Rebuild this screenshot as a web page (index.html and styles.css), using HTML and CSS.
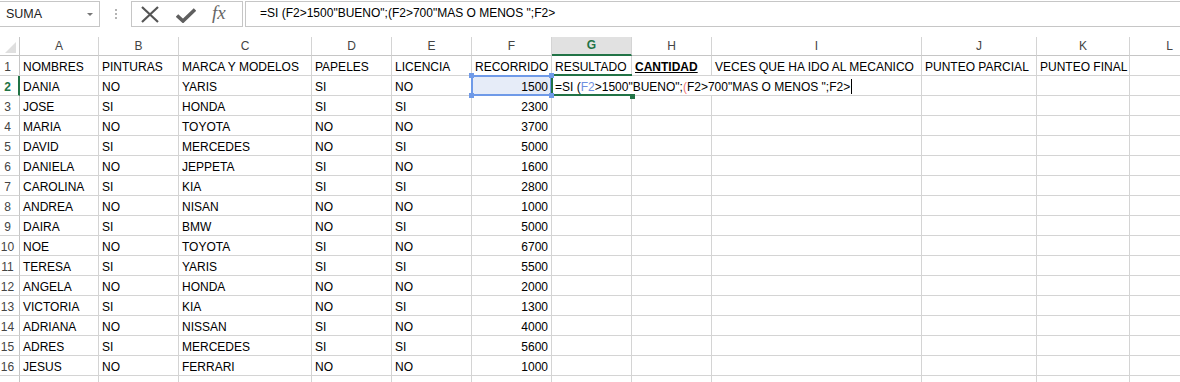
FILE: index.html
```html
<!DOCTYPE html>
<html lang="es">
<head>
    <meta charset="UTF-8">
    <title>Libro1 - Excel</title>
    <link rel="stylesheet" href="styles.css">
</head>
<body>

    <!-- Formula bar -->
    <div class="formula-bar">
        <div class="name-box"><span>SUMA</span><span class="arrow"></span></div>
        <div class="grip"><span></span><span></span><span></span></div>
        <div class="fx-box">
            <svg class="icon-x" width="18" height="17" viewBox="0 0 18 17"><path d="M1 1 L17 16 M17 1 L1 16" stroke="#555" stroke-width="2.2" fill="none"/></svg>
            <svg class="icon-check" width="20" height="15" viewBox="0 0 20 15"><path d="M1 7.5 L7 13 L19 1.5" stroke="#5f5f5f" stroke-width="3.6" fill="none"/></svg>
            <span class="fx">fx</span>
        </div>
        <div class="formula-input">=SI (F2&gt;1500"BUENO";(F2&gt;700"MAS O MENOS ";F2&gt;</div>
    </div>

    <!-- Sheet -->
    <div class="sheet">
        <div class="row head">
            <div class="corner"><span class="tri"></span></div>
            <div class="ch">A</div><div class="ch">B</div><div class="ch">C</div><div class="ch">D</div>
            <div class="ch">E</div><div class="ch">F</div><div class="ch sel">G</div><div class="ch">H</div>
            <div class="ch">I</div><div class="ch">J</div><div class="ch">K</div><div class="ch">L</div>
        </div>
        <div class="row">
            <div class="rh">1</div>
            <div class="c">NOMBRES</div><div class="c">PINTURAS</div><div class="c">MARCA Y MODELOS</div><div class="c">PAPELES</div>
            <div class="c">LICENCIA</div><div class="c">RECORRIDO</div><div class="c">RESULTADO</div><div class="c bold">CANTIDAD</div>
            <div class="c">VECES QUE HA IDO AL MECANICO</div><div class="c">PUNTEO PARCIAL</div><div class="c">PUNTEO FINAL</div><div class="c"></div>
        </div>
        <div class="row">
            <div class="rh sel">2</div>
            <div class="c">DANIA</div><div class="c">NO</div><div class="c">YARIS</div><div class="c">SI</div>
            <div class="c">NO</div>
            <div class="c n picked">1500<i class="hd tl"></i><i class="hd tr"></i><i class="hd bl"></i><i class="hd br"></i></div>
            <div class="c editing">=SI (<span class="ref">F2</span>&gt;1500"BUENO";<span class="paren">(</span>F2&gt;700"MAS O MENOS ";F2&gt;<span class="caret"></span></div>
            <div class="c open"></div>
            <div class="c"></div><div class="c"></div><div class="c"></div><div class="c"></div>
        </div>
        <div class="row">
            <div class="rh">3</div>
            <div class="c">JOSE</div><div class="c">SI</div><div class="c">HONDA</div><div class="c">SI</div>
            <div class="c">SI</div><div class="c n">2300</div><div class="c"></div><div class="c"></div>
            <div class="c"></div><div class="c"></div><div class="c"></div><div class="c"></div>
        </div>
        <div class="row">
            <div class="rh">4</div>
            <div class="c">MARIA</div><div class="c">NO</div><div class="c">TOYOTA</div><div class="c">NO</div>
            <div class="c">NO</div><div class="c n">3700</div><div class="c"></div><div class="c"></div>
            <div class="c"></div><div class="c"></div><div class="c"></div><div class="c"></div>
        </div>
        <div class="row">
            <div class="rh">5</div>
            <div class="c">DAVID</div><div class="c">SI</div><div class="c">MERCEDES</div><div class="c">NO</div>
            <div class="c">SI</div><div class="c n">5000</div><div class="c"></div><div class="c"></div>
            <div class="c"></div><div class="c"></div><div class="c"></div><div class="c"></div>
        </div>
        <div class="row">
            <div class="rh">6</div>
            <div class="c">DANIELA</div><div class="c">NO</div><div class="c">JEPPETA</div><div class="c">SI</div>
            <div class="c">NO</div><div class="c n">1600</div><div class="c"></div><div class="c"></div>
            <div class="c"></div><div class="c"></div><div class="c"></div><div class="c"></div>
        </div>
        <div class="row">
            <div class="rh">7</div>
            <div class="c">CAROLINA</div><div class="c">SI</div><div class="c">KIA</div><div class="c">SI</div>
            <div class="c">SI</div><div class="c n">2800</div><div class="c"></div><div class="c"></div>
            <div class="c"></div><div class="c"></div><div class="c"></div><div class="c"></div>
        </div>
        <div class="row">
            <div class="rh">8</div>
            <div class="c">ANDREA</div><div class="c">NO</div><div class="c">NISAN</div><div class="c">NO</div>
            <div class="c">NO</div><div class="c n">1000</div><div class="c"></div><div class="c"></div>
            <div class="c"></div><div class="c"></div><div class="c"></div><div class="c"></div>
        </div>
        <div class="row">
            <div class="rh">9</div>
            <div class="c">DAIRA</div><div class="c">SI</div><div class="c">BMW</div><div class="c">NO</div>
            <div class="c">SI</div><div class="c n">5000</div><div class="c"></div><div class="c"></div>
            <div class="c"></div><div class="c"></div><div class="c"></div><div class="c"></div>
        </div>
        <div class="row">
            <div class="rh">10</div>
            <div class="c">NOE</div><div class="c">NO</div><div class="c">TOYOTA</div><div class="c">SI</div>
            <div class="c">NO</div><div class="c n">6700</div><div class="c"></div><div class="c"></div>
            <div class="c"></div><div class="c"></div><div class="c"></div><div class="c"></div>
        </div>
        <div class="row">
            <div class="rh">11</div>
            <div class="c">TERESA</div><div class="c">SI</div><div class="c">YARIS</div><div class="c">SI</div>
            <div class="c">SI</div><div class="c n">5500</div><div class="c"></div><div class="c"></div>
            <div class="c"></div><div class="c"></div><div class="c"></div><div class="c"></div>
        </div>
        <div class="row">
            <div class="rh">12</div>
            <div class="c">ANGELA</div><div class="c">NO</div><div class="c">HONDA</div><div class="c">NO</div>
            <div class="c">NO</div><div class="c n">2000</div><div class="c"></div><div class="c"></div>
            <div class="c"></div><div class="c"></div><div class="c"></div><div class="c"></div>
        </div>
        <div class="row">
            <div class="rh">13</div>
            <div class="c">VICTORIA</div><div class="c">SI</div><div class="c">KIA</div><div class="c">NO</div>
            <div class="c">SI</div><div class="c n">1300</div><div class="c"></div><div class="c"></div>
            <div class="c"></div><div class="c"></div><div class="c"></div><div class="c"></div>
        </div>
        <div class="row">
            <div class="rh">14</div>
            <div class="c">ADRIANA</div><div class="c">NO</div><div class="c">NISSAN</div><div class="c">SI</div>
            <div class="c">NO</div><div class="c n">4000</div><div class="c"></div><div class="c"></div>
            <div class="c"></div><div class="c"></div><div class="c"></div><div class="c"></div>
        </div>
        <div class="row">
            <div class="rh">15</div>
            <div class="c">ADRES</div><div class="c">SI</div><div class="c">MERCEDES</div><div class="c">SI</div>
            <div class="c">SI</div><div class="c n">5600</div><div class="c"></div><div class="c"></div>
            <div class="c"></div><div class="c"></div><div class="c"></div><div class="c"></div>
        </div>
        <div class="row">
            <div class="rh">16</div>
            <div class="c">JESUS</div><div class="c">NO</div><div class="c">FERRARI</div><div class="c">NO</div>
            <div class="c">NO</div><div class="c n">1000</div><div class="c"></div><div class="c"></div>
            <div class="c"></div><div class="c"></div><div class="c"></div><div class="c"></div>
        </div>
        <div class="row">
            <div class="rh"></div>
            <div class="c"></div><div class="c"></div><div class="c"></div><div class="c"></div>
            <div class="c"></div><div class="c"></div><div class="c"></div><div class="c"></div>
            <div class="c"></div><div class="c"></div><div class="c"></div><div class="c"></div>
        </div>
    </div>

</body>
</html>
```

FILE: styles.css
```css
/* Page */
body {
    margin: 0;
    width: 1180px;
    height: 382px;
    overflow: hidden;
    background: #fff;
    color: #000;
    font-family: "Liberation Sans", Arial, sans-serif;
    font-size: 12px;
}

/* Formula bar */
.formula-bar {
    display: flex;
    height: 26px;
    margin-top: 1px;
}

.name-box {
    width: 100px;
    box-sizing: border-box;
    border: 1px solid #c6c6c6;
    border-left: none;
    display: flex;
    align-items: center;
    justify-content: space-between;
    padding: 0 6px 0 6px;
    color: #222;
    font-size: 12.5px;
}

.name-box .arrow {
    border-left: 3.5px solid transparent;
    border-right: 3.5px solid transparent;
    border-top: 3px solid #777;
    margin-top: 1px;
}

.grip {
    width: 31px;
    display: flex;
    flex-direction: column;
    align-items: center;
    justify-content: center;
    gap: 2px;
}

.grip span {
    width: 2px;
    height: 2px;
    background: #b4b4b4;
}

.fx-box {
    width: 112px;
    box-sizing: border-box;
    border: 1px solid #c6c6c6;
    display: flex;
    align-items: center;
    padding-left: 9px;
}

.icon-x {
    margin-top: 1px;
}

.icon-check {
    margin-left: 17px;
    margin-top: 2px;
}

.fx {
    margin-left: 16px;
    margin-top: -3px;
    font-family: "Liberation Serif", "Times New Roman", serif;
    font-style: italic;
    font-size: 19px;
    color: #666;
}

.formula-input {
    flex: 1;
    margin-left: 2px;
    border: 1px solid #c6c6c6;
    border-right: none;
    padding-left: 14px;
    line-height: 23px;
    white-space: nowrap;
}

/* Sheet grid */
.sheet {
    margin-top: 10px;
}

.row {
    display: grid;
    grid-template-columns: 20px 79px 80px 133px 80px 80px 80px 80px 80px 210px 115px 93px 80px;
    height: 20px;
    width: 1210px;
}

.row.head {
    height: 19px;
}

.corner,
.ch,
.rh,
.c {
    box-sizing: border-box;
    border-right: 1px solid #d4d4d4;
    border-bottom: 1px solid #d4d4d4;
    white-space: nowrap;
}

.corner {
    position: relative;
    border-right-color: #c6c6c6;
    border-bottom-color: #c6c6c6;
}

.corner .tri {
    position: absolute;
    right: 3px;
    bottom: 2px;
    border-left: 11px solid transparent;
    border-bottom: 11px solid #dfdfdf;
}

.ch {
    text-align: center;
    color: #444;
    line-height: 18px;
    border-bottom-color: #c6c6c6;
}

.ch.sel {
    background: #e1e1e1;
    color: #217346;
    font-weight: bold;
    border-bottom: 2px solid #217346;
    line-height: 17px;
}

.rh {
    text-align: center;
    color: #444;
    padding: 3px 4px 0 0;
    line-height: 16px;
    border-right-color: #c6c6c6;
}

.rh.sel {
    color: #217346;
    font-weight: bold;
    border-right: 2px solid #217346;
    padding-right: 3px;
}

.c {
    padding: 3px 3px 0;
    line-height: 16px;
}

.c.n {
    text-align: right;
}

.c.bold {
    font-weight: bold;
    text-decoration: underline;
}

/* F2: selected reference */
.c.picked {
    position: relative;
    background: #e6ecf8;
}

.c.picked::after {
    content: "";
    position: absolute;
    left: -1px;
    top: -1px;
    right: -1px;
    bottom: -1px;
    border: 2px solid #6f9ae8;
}

.hd {
    position: absolute;
    width: 5px;
    height: 5px;
    background: #6f9ae8;
    z-index: 2;
}

.hd.tl { left: -3px; top: -3px; }
.hd.tr { right: -3px; top: -3px; }
.hd.bl { left: -3px; bottom: -3px; }
.hd.br { right: -3px; bottom: -3px; }

/* G2: cell being edited */
.c.editing {
    position: relative;
    z-index: 1;
    overflow: visible;
    border-right: none;
}

.c.editing::before {
    content: "";
    position: absolute;
    left: -1px;
    top: -2px;
    width: 81px;
    height: 22px;
    box-sizing: border-box;
    border: 2px solid #217346;
    border-right: none;
}

.c.editing::after {
    content: "";
    position: absolute;
    left: 78px;
    top: 18px;
    width: 5px;
    height: 5px;
    background: #217346;
}

.c.open {
    border-right: none;
}

.ref {
    color: #6f8fe0;
}

.paren {
    color: #f07a7a;
}

.caret {
    display: inline-block;
    width: 1px;
    height: 15px;
    background: #000;
    vertical-align: -3px;
    margin-left: 1px;
}
```
